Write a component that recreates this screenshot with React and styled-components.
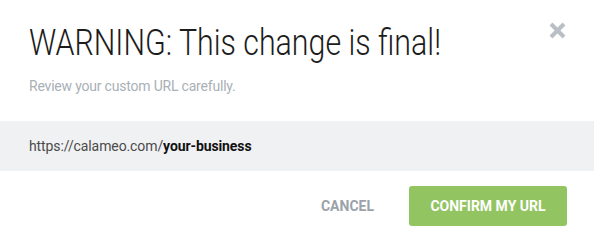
import React from 'react';
import styled, { createGlobalStyle } from 'styled-components';

const Global = createGlobalStyle`
  html, body {
    margin: 0;
    padding: 0;
    background: #fff;
  }
  body {
    font-family: Roboto, "Liberation Sans", sans-serif;
  }
`;

const Modal = styled.div`
  position: relative;
  width: 594px;
  height: 238px;
  background: #fff;
`;

const Header = styled.div`
  padding: 21px 29px 0 29px;
  height: 121px;
  box-sizing: border-box;
`;

// the heading in the shot is drawn narrow, so squeeze it horizontally
const Title = styled.h1`
  margin: 0;
  font-family: Roboto, "Liberation Sans", sans-serif;
  font-weight: 300;
  font-size: 37px;
  line-height: 44px;
  color: #1c1c1c;
  white-space: nowrap;
  transform: scaleX(0.82);
  transform-origin: left center;
`;

const Subtitle = styled.p`
  margin: 12px 0 0 0;
  font-size: 14px;
  line-height: 18px;
  letter-spacing: -0.2px;
  color: #a9b0b6;
`;

const Close = styled.button`
  position: absolute;
  top: 21px;
  right: 28px;
  width: 18px;
  height: 18px;
  padding: 0;
  border: 0;
  background: none;
  cursor: pointer;
  display: flex;
  align-items: center;
  justify-content: center;
`;

const UrlBand = styled.div`
  height: 50px;
  background: #f0f1f3;
  display: flex;
  align-items: center;
  padding: 0 29px;
  font-size: 14px;
  letter-spacing: -0.1px;
  color: #4a4a4a;
`;

const Slug = styled.b`
  font-weight: 700;
  color: #111;
`;

const Footer = styled.div`
  display: flex;
  justify-content: flex-end;
  align-items: center;
  gap: 16px;
  padding: 15px 27px 0 0;
`;

const Button = styled.button`
  height: 40px;
  border: 0;
  border-radius: 3px;
  font-family: Roboto, "Liberation Sans", sans-serif;
  font-weight: 700;
  font-size: 14px;
  text-transform: uppercase;
  cursor: pointer;
  padding: 0 ${(p) => (p.primary ? '21px' : '19px')};
  background: ${(p) => (p.primary ? '#93c462' : 'transparent')};
  color: ${(p) => (p.primary ? '#fff' : '#9aa3aa')};
  min-width: ${(p) => (p.primary ? '158px' : 'auto')};
`;

const App = () => (
  <>
    <Global />
    <Modal>
      <Header>
        <Title>WARNING: This change is final!</Title>
        <Subtitle>Review your custom URL carefully.</Subtitle>
      </Header>
      <Close aria-label="Close">
        <svg width="17" height="17" viewBox="0 0 17 17">
          <path d="M2 2 L15 15 M15 2 L2 15" stroke="#b9bfc4" strokeWidth="4" />
        </svg>
      </Close>
      <UrlBand>
        https://calameo.com/<Slug>your-business</Slug>
      </UrlBand>
      <Footer>
        <Button>Cancel</Button>
        <Button primary>Confirm my URL</Button>
      </Footer>
    </Modal>
  </>
);

export default App;
